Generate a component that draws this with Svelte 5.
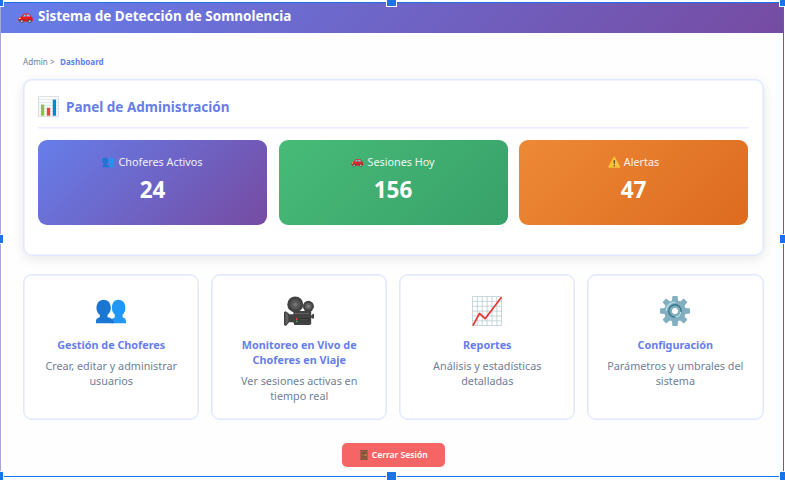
<script>
  const stats = [
    { icon: 'people', label: 'Choferes Activos', value: 24, tone: 'violet' },
    { icon: 'car', label: 'Sesiones Hoy', value: 156, tone: 'green' },
    { icon: 'warning', label: 'Alertas', value: 47, tone: 'orange' }
  ];
  const modules = [
    { icon: 'people', title: ['Gestión de Choferes'], text: ['Crear, editar y administrar', 'usuarios'] },
    { icon: 'camera', title: ['Monitoreo en Vivo de', 'Choferes en Viaje'], text: ['Ver sesiones activas en', 'tiempo real'] },
    { icon: 'trend', title: ['Reportes'], text: ['Análisis y estadísticas', 'detalladas'] },
    { icon: 'gear', title: ['Configuración'], text: ['Parámetros y umbrales del', 'sistema'] }
  ];
  const handles = ['nw', 'n', 'ne', 'w', 'e', 'sw', 's', 'se'];
  const teeth = [0, 45, 90, 135, 180, 225, 270, 315];
</script>

{#snippet icon(name)}
  <svg class="icon {name}" viewBox="0 0 32 32" aria-hidden="true">
    {#if name === 'people'}
      <path fill="#2196f3" d="M16 29v-2c0-2 1-3 4-4.200v-3c-2-1.800-3-4-3-7C17 7.500 19.500 4 24 4s7.300 3.800 7.300 8.800c0 3-1 5.500-3 7.200v2.600c2.700.8 3.700 2.200 3.700 4.400v2z" />
      <path fill="#1976d2" d="M0 29v-2c0-2.200 1-3.500 4-4.400V20c-2.500-1.800-3.500-4.200-3.500-7.200C.5 7.800 3.500 4 8.200 4s7.600 3.800 7.600 8.800c0 3-1.200 5.400-3.500 7.200v2.600C17 23.500 19 25.500 19 29z" />
    {:else if name === 'car'}
      <path fill="#e51c23" d="M1 20c0-3 2-5 6-6l4-5c1-1 2-1.500 4-1.500h5c3 0 5 1 7 4l2 3c2 1 2.500 3 2.500 6 0 3-1 4.500-3 4.500H4c-2 0-3-2-3-5z" />
      <path fill="#81d4fa" d="M10 14l3-3.500c.5-.7 1.200-1 2-1h1.500V14zm8.500-4.500H21c2 0 3.300.8 4.500 3L26 14h-7.500z" />
      <path fill="#b71c1c" d="M1.500 20h29v2h-29z" />
      <path fill="#fff59d" d="M2 17l4-1-1 3H2z" />
      <circle cx="8" cy="24" r="3.500" fill="#37474f" /><circle cx="25" cy="24" r="3.500" fill="#37474f" />
      <circle cx="8" cy="24" r="2" fill="#cfd8dc" /><circle cx="25" cy="24" r="2" fill="#cfd8dc" />
    {:else if name === 'warning'}
      <path fill="#fcc938" d="M14.300 2.500c.8-1.400 2.600-1.400 3.400 0l13.500 25c.8 1.500 0 2.500-1.500 2.500H2.300c-1.500 0-2.300-1-1.500-2.500z" />
      <path fill="#454545" d="M14 11h4l-.8 10h-2.400z" /><circle cx="16" cy="25" r="2" fill="#454545" />
    {:else if name === 'chart'}
      <path fill="#fafafa" stroke="#cfd8dc" stroke-width="1.200" d="M.7.700h30.600v30.600H.7z" />
      <path stroke="#dce3e6" d="M1 5.500h30M1 10h30M1 14.500h30M1 19h30M1 23.500h30M1 28h30" />
      <path fill="#8bc34a" d="M4.500 13h5v17h-5z" /><path fill="#f44336" d="M13.500 18h5v12h-5z" /><path fill="#0288d1" d="M22.500 5.500h5V30h-5z" />
    {:else if name === 'trend'}
      <path fill="#fff" stroke="#b8c8cf" stroke-width=".8" d="M.5.500h31v31H.5zM5.700.500v31M10.900.500v31M16.100.500v31M21.300.500v31M26.500.500v31M.5 5.700h31M.5 10.900h31M.5 16.100h31M.5 21.300h31M.5 26.500h31" />
      <path fill="none" stroke="#e53935" stroke-width="1.900" stroke-linejoin="round" stroke-linecap="round" d="M1.300 31L8 18.500l6 5.700L31 1.800" />
    {:else if name === 'camera'}
      <path fill="#424242" d="M0 17l2-.8 4 3.300h4V16h19v5l2-2h1v5h-2l-1-1v7l-2 1H11l-1-3H5.500L2 32l-2-1z" />
      <path fill="#616161" d="M1.500 17v14l3-3.500V20zM11 18h16v1.200H11z" />
      <circle cx="12" cy="9" r="8.500" fill="#424242" /><circle cx="12" cy="9" r="5.300" fill="#585858" /><circle cx="12" cy="9" r="2.200" fill="#757575" />
      <circle cx="26" cy="11" r="5.900" fill="#424242" /><circle cx="26" cy="11" r="3.500" fill="#606060" /><circle cx="26" cy="11" r="1.400" fill="#858585" />
      <path fill="#303030" d="M15 23.500h12V27H15z" /><path stroke="#757575" stroke-width=".7" d="M16 25.500h10" />
      <circle cx="13.700" cy="24.500" r="1" fill="#f44336" /><circle cx="13.700" cy="27" r="1" fill="#4caf50" />
    {:else if name === 'gear'}
      {#each teeth as angle}
        <path fill="#82aec0" d="M12.500 7l.8-7h5.400l.8 7z" transform="rotate({angle} 16 16)" />
      {/each}
      <circle cx="16" cy="16" r="11.500" fill="#82aec0" />
      <circle cx="16" cy="16" r="6.600" fill="none" stroke="#2f7889" stroke-width="1.500" />
      <path fill="none" stroke="#b9e4ea" stroke-width="1.300" d="M6.500 16A9.500 9.500 0 0 1 16 6.500M22.300 17a6.500 6.500 0 0 1-6 5.600" />
      <circle cx="16" cy="16" r="4.800" fill="#82aec0" /><circle cx="16" cy="16" r="3.200" fill="#fff" />
    {:else if name === 'door'}
      <path fill="#6d4c41" d="M5 0h22v32H5z" /><path fill="#a56a43" d="M8 2h16v28H8z" />
      <path fill="#855437" d="M10 5h12v9H10zm0 13h12v9H10z" /><circle cx="22" cy="16" r="2" fill="#ffca28" />
    {/if}
  </svg>
{/snippet}

<div class="screen">
  <header>{@render icon('car')}<span>Sistema de Detección de Somnolencia</span></header>
  <main>
    <nav><span>Admin &gt;</span><b>Dashboard</b></nav>
    <section class="panel">
      <h1>{@render icon('chart')}<span>Panel de Administración</span></h1>
      <div class="stats">
        {#each stats as stat}
          <article class="stat {stat.tone}">
            <div class="label">{@render icon(stat.icon)}<span>{stat.label}</span></div>
            <strong>{stat.value}</strong>
          </article>
        {/each}
      </div>
    </section>
    <section class="modules">
      {#each modules as item}
        <article class="module">
          {@render icon(item.icon)}
          <h2>{#each item.title as line}<span>{line}</span>{/each}</h2>
          <p>{#each item.text as line}<span>{line}</span>{/each}</p>
        </article>
      {/each}
    </section>
    <button>{@render icon('door')}<span>Cerrar Sesión</span></button>
  </main>
  <div class="selection"></div>
  {#each handles as h}<i class="handle {h}"></i>{/each}
</div>

<style>
  :global(body) { margin: 0; background: #fff; }
  .screen { position: relative; box-sizing: border-box; width: 785px; height: 480px; padding-top: 2px; overflow: hidden; font-family: "Noto Sans", sans-serif; background: #fefefe; }
  .icon { display: block; flex: none; overflow: visible; }
  span { white-space: nowrap; }
  header { display: flex; align-items: center; box-sizing: border-box; width: 784px; height: 31.400px; padding: 0 0 4px 18px; gap: 5px; background: linear-gradient(135deg, #667eea, #764ba2); color: #fff; font-size: 13.470px; font-weight: 700; }
  header .icon { width: 15px; height: 15px; margin-top: 3px; }
  main { display: flex; flex-direction: column; padding: 0 21.500px 0 23px; }
  nav { display: flex; align-items: center; height: 12px; margin-top: 22px; gap: 5.500px; font-size: 8.100px; color: #718096; }
  nav b { color: #667eea; }
  .panel { box-sizing: border-box; height: 177.500px; margin-top: 11.500px; padding: 13.500px 14px; border: 1px solid #e0e7ff; border-radius: 9px; background: #fff; box-shadow: inset 0 0 0 .5px #e0e7ff, 0 3px 12px rgba(0, 0, 0, .09); }
  h1 { display: flex; align-items: center; box-sizing: border-box; height: 34.500px; margin: 0 0 11.700px; padding-bottom: 6.500px; gap: 7px; border-bottom: 1px solid #e9edff; box-shadow: 0 .6px #e9edff; color: #667eea; font-size: 13.500px; font-weight: 700; line-height: 18px; }
  h1 .icon { width: 21px; height: 21px; }
  .stats { display: grid; grid-template-columns: repeat(3, 1fr); gap: 11.500px; margin-right: .5px; }
  .stat { display: flex; flex-direction: column; align-items: center; box-sizing: border-box; height: 85px; padding-top: 13.500px; border-radius: 9px; color: #fff; }
  .violet { background: linear-gradient(135deg, #667eea, #764ba2); }
  .green { background: linear-gradient(135deg, #48bb78, #38a169); }
  .orange { background: linear-gradient(135deg, #ed8936, #dd6b20); }
  .label { display: flex; align-items: center; height: 16px; gap: 3.500px; font-size: 10.800px; opacity: .9; }
  .label .icon { width: 12.500px; height: 12.500px; margin-top: 1.500px; }
  .stat strong { margin-top: 5px; font-size: 22.500px; line-height: 32px; }
  .modules { display: grid; grid-template-columns: repeat(4, 1fr); gap: 11.700px; margin-top: 17.500px; }
  .module { display: flex; flex-direction: column; align-items: center; box-sizing: border-box; height: 146.500px; padding-top: 20.700px; border: 1px solid #e0e7ff; border-radius: 9px; background: #fff; box-shadow: inset 0 0 0 .5px #e0e7ff; text-align: center; }
  .module .icon { width: 30px; height: 30px; }
  h2 { margin: 11px 0 6px; color: #667eea; font-size: 10.800px; font-weight: 700; line-height: 15px; }
  p { margin: 0; color: #718096; font-size: 10.800px; line-height: 15px; }
  h2 span, p span { display: block; }
  button { display: flex; align-items: center; justify-content: center; align-self: center; box-sizing: border-box; width: 103px; height: 24px; margin-top: 22.800px; padding: 0 0 1px; gap: 3px; border: 0; border-radius: 5px; background: #f56565; color: #fff; font-family: inherit; font-size: 8.650px; font-weight: 600; }
  button .icon { width: 10px; height: 10px; }
  .selection { position: absolute; box-sizing: border-box; left: 0; top: 2px; width: 784px; height: 475px; border: 1px solid #1a73e8; border-left-color: #a9a6dc; }
  .handle { position: absolute; box-sizing: border-box; width: 11px; height: 10px; border: 1px solid #fff; background: #1a73e8; }
  .nw, .n, .ne { top: -3px; } .w, .e { top: 234px; } .sw, .s, .se { top: 471px; }
  .nw, .w, .sw { left: -7px; } .n, .s { left: 386px; } .ne, .e, .se { left: 779px; }
</style>
